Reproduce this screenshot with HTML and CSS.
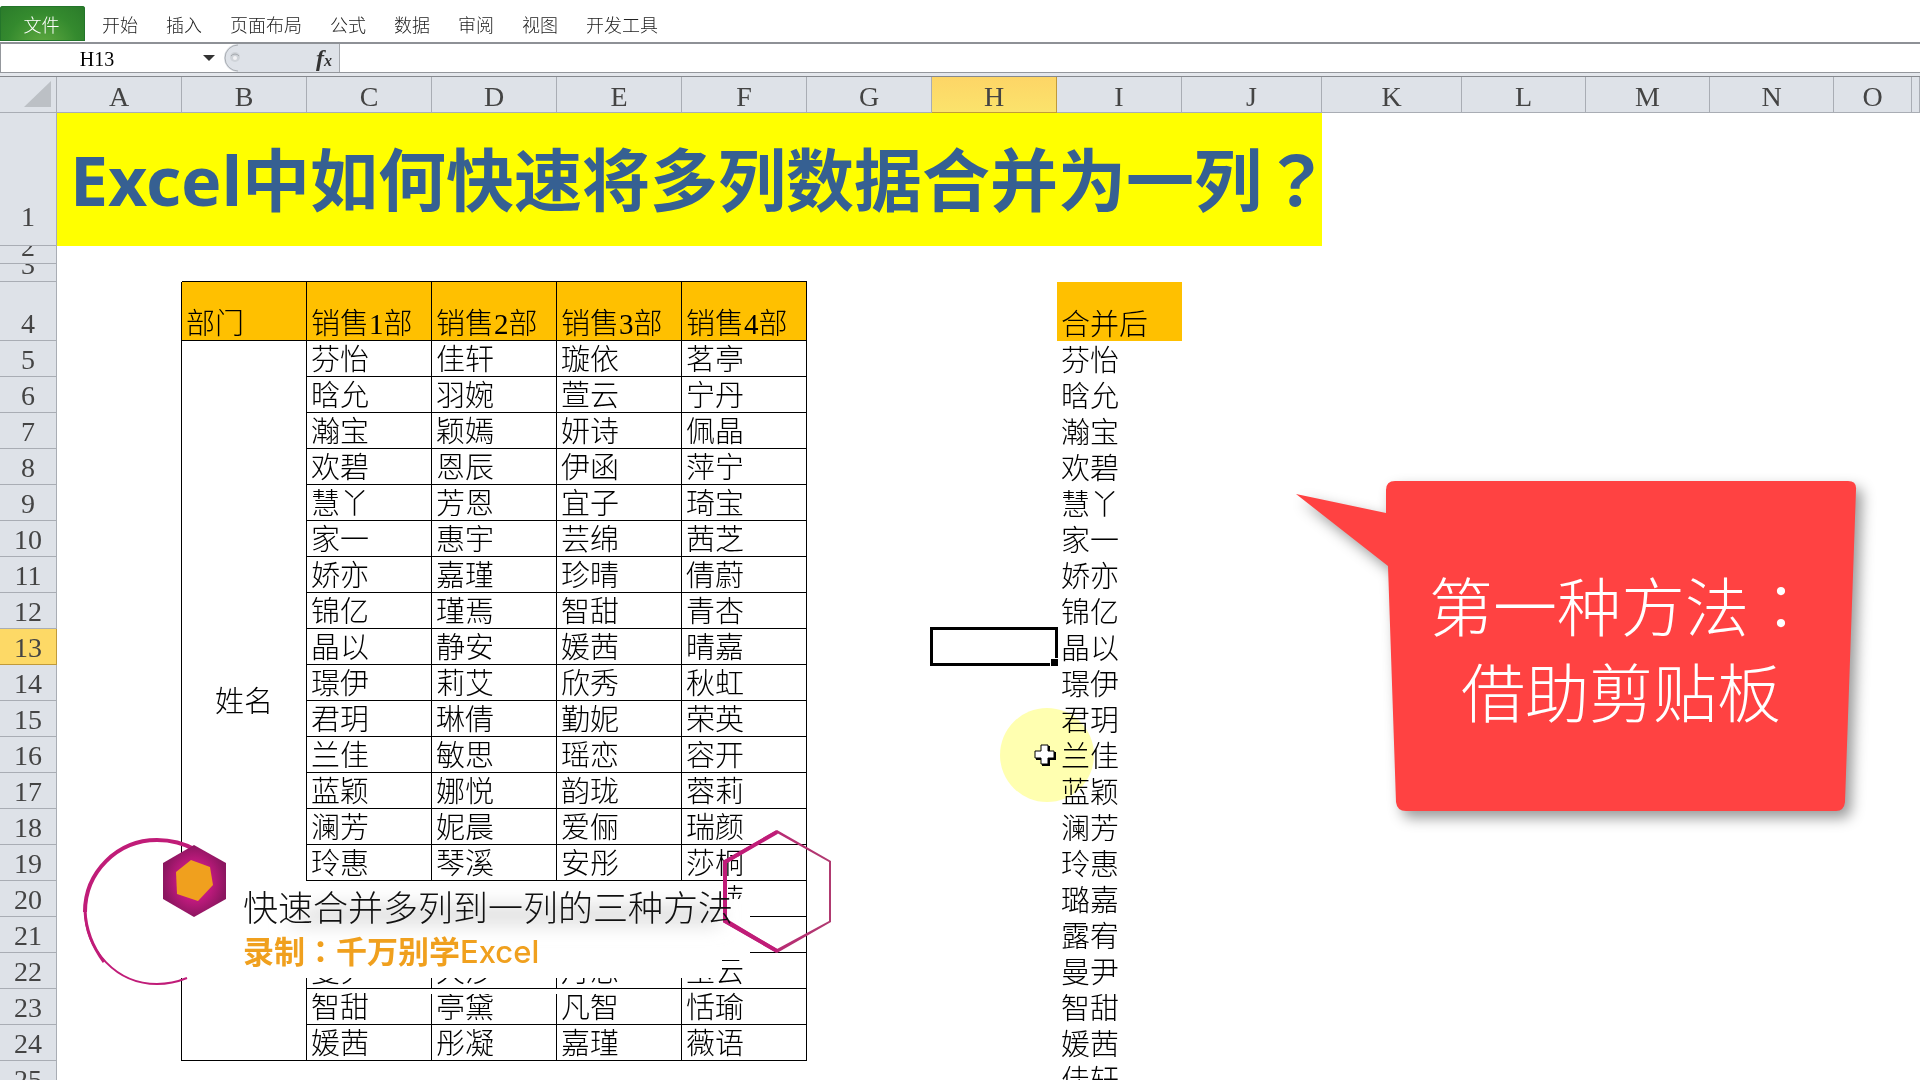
FILE: index.html
```html
<!DOCTYPE html>
<html lang="zh-CN">
<head>
<meta charset="utf-8">
<title>Excel中如何快速将多列数据合并为一列？</title>
<link rel="stylesheet" href="styles.css">
</head>
<body>
<nav class="ribbon">
  <button class="file-tab" type="button">文件</button>
  <a class="tab" href="#">开始</a>
  <a class="tab" href="#">插入</a>
  <a class="tab" href="#">页面布局</a>
  <a class="tab" href="#">公式</a>
  <a class="tab" href="#">数据</a>
  <a class="tab" href="#">审阅</a>
  <a class="tab" href="#">视图</a>
  <a class="tab" href="#">开发工具</a>
</nav>
<div class="formula-bar">
  <div class="name-box">
    <input class="name-input" type="text" value="H13" aria-label="名称框">
    <button class="name-drop" type="button" aria-label="展开名称框"><svg width="12" height="6" viewBox="0 0 12 6"><path d="M0 0h12L6 6z" fill="#333"/></svg></button>
  </div>
  <div class="fx-area">
    <svg class="fx-knob" width="16" height="28" viewBox="0 0 16 28"><path d="M14 1A13 13 0 0 0 14 27" fill="none" stroke="#a9adb2"/><circle cx="11" cy="13" r="5" fill="#cfd3d8"/><path d="M7 12a5 5 0 0 1 8 0" fill="none" stroke="#a4a8ad"/><circle cx="11" cy="14" r="2" fill="#f2f3f5"/></svg>
    <button class="fx" type="button" aria-label="插入函数">f<sub>x</sub></button>
  </div>
  <input class="formula-input" type="text" aria-label="编辑栏">
</div>
<div class="divider"></div>
<main class="sheet">
<table class="grid">
<colgroup><col class="c-row"><col class="c-std" span="9"><col class="c-wide" span="2"><col class="c-mid" span="3"><col class="c-small"><col></colgroup>
<thead>
<tr><th class="corner"><svg width="28" height="27" viewBox="0 0 28 27"><path d="M27 0v26H0z" fill="#bcc0c5"/></svg></th><th scope="col">A</th><th scope="col">B</th><th scope="col">C</th><th scope="col">D</th><th scope="col">E</th><th scope="col">F</th><th scope="col">G</th><th scope="col" class="active">H</th><th scope="col">I</th><th scope="col">J</th><th scope="col">K</th><th scope="col">L</th><th scope="col">M</th><th scope="col">N</th><th scope="col">O</th><th></th></tr>
</thead>
<tbody>
<tr class="r1"><th scope="row">1</th><td class="title" colspan="10">Excel中如何快速将多列数据合并为一列<span class="punct" lang="zh-TW">？</span></td></tr>
<tr class="thin"><th scope="row"><div class="clip">2</div></th></tr>
<tr class="thin"><th scope="row"><div class="clip">3</div></th><td></td><td class="under"></td><td class="under"></td><td class="under"></td><td class="under"></td><td class="under"></td></tr>
<tr class="r4"><th scope="row">4</th><td class="edge"></td><td class="b head">部门</td><td class="b head">销售1部</td><td class="b head">销售2部</td><td class="b head">销售3部</td><td class="b head">销售4部</td><td></td><td></td><td class="head">合并后</td></tr>
<tr><th scope="row">5</th><td class="edge"></td><td class="b span" rowspan="20">姓名</td><td class="b">芬怡</td><td class="b">佳轩</td><td class="b">璇依</td><td class="b">茗亭</td><td></td><td></td><td>芬怡</td></tr>
<tr><th scope="row">6</th><td class="edge"></td><td class="b">晗允</td><td class="b">羽婉</td><td class="b">萱云</td><td class="b">宁丹</td><td></td><td></td><td>晗允</td></tr>
<tr><th scope="row">7</th><td class="edge"></td><td class="b">瀚宝</td><td class="b">颖嫣</td><td class="b">妍诗</td><td class="b">佩晶</td><td></td><td></td><td>瀚宝</td></tr>
<tr><th scope="row">8</th><td class="edge"></td><td class="b">欢碧</td><td class="b">恩辰</td><td class="b">伊函</td><td class="b">萍宁</td><td></td><td></td><td>欢碧</td></tr>
<tr><th scope="row">9</th><td class="edge"></td><td class="b">慧丫</td><td class="b">芳恩</td><td class="b">宜子</td><td class="b">琦宝</td><td></td><td></td><td>慧丫</td></tr>
<tr><th scope="row">10</th><td class="edge"></td><td class="b">家一</td><td class="b">惠宇</td><td class="b">芸绵</td><td class="b">茜芝</td><td></td><td></td><td>家一</td></tr>
<tr><th scope="row">11</th><td class="edge"></td><td class="b">娇亦</td><td class="b">嘉瑾</td><td class="b">珍晴</td><td class="b">倩蔚</td><td></td><td></td><td>娇亦</td></tr>
<tr><th scope="row">12</th><td class="edge"></td><td class="b">锦亿</td><td class="b">瑾焉</td><td class="b">智甜</td><td class="b">青杏</td><td></td><td></td><td>锦亿</td></tr>
<tr><th scope="row" class="active">13</th><td class="edge"></td><td class="b">晶以</td><td class="b">静安</td><td class="b">媛茜</td><td class="b">晴嘉</td><td></td><td class="selected"><span class="selection"></span></td><td>晶以</td></tr>
<tr><th scope="row">14</th><td class="edge"></td><td class="b">璟伊</td><td class="b">莉艾</td><td class="b">欣秀</td><td class="b">秋虹</td><td></td><td></td><td>璟伊</td></tr>
<tr><th scope="row">15</th><td class="edge"></td><td class="b">君玥</td><td class="b">琳倩</td><td class="b">勤妮</td><td class="b">荣英</td><td></td><td></td><td>君玥</td></tr>
<tr><th scope="row">16</th><td class="edge"></td><td class="b">兰佳</td><td class="b">敏思</td><td class="b">瑶恋</td><td class="b">容开</td><td></td><td></td><td>兰佳</td></tr>
<tr><th scope="row">17</th><td class="edge"></td><td class="b">蓝颖</td><td class="b">娜悦</td><td class="b">韵珑</td><td class="b">蓉莉</td><td></td><td></td><td>蓝颖</td></tr>
<tr><th scope="row">18</th><td class="edge"></td><td class="b">澜芳</td><td class="b">妮晨</td><td class="b">爱俪</td><td class="b">瑞颜</td><td></td><td></td><td>澜芳</td></tr>
<tr><th scope="row">19</th><td class="edge"></td><td class="b">玲惠</td><td class="b">琴溪</td><td class="b">安彤</td><td class="b">莎桐</td><td></td><td></td><td>玲惠</td></tr>
<tr><th scope="row">20</th><td class="edge"></td><td class="b"></td><td class="b"></td><td class="b"></td><td class="b">若萍</td><td></td><td></td><td>璐嘉</td></tr>
<tr><th scope="row">21</th><td class="edge"></td><td class="b"></td><td class="b"></td><td class="b"></td><td class="b"></td><td></td><td></td><td>露宥</td></tr>
<tr><th scope="row">22</th><td class="edge"></td><td class="b">曼尹</td><td class="b">天沙</td><td class="b">月思</td><td class="b">玉云</td><td></td><td></td><td>曼尹</td></tr>
<tr><th scope="row">23</th><td class="edge"></td><td class="b">智甜</td><td class="b">亭黛</td><td class="b">凡智</td><td class="b">恬瑜</td><td></td><td></td><td>智甜</td></tr>
<tr><th scope="row">24</th><td class="edge"></td><td class="b">媛茜</td><td class="b">彤凝</td><td class="b">嘉瑾</td><td class="b">薇语</td><td></td><td></td><td>媛茜</td></tr>
<tr><th scope="row">25</th><td></td><td></td><td></td><td></td><td></td><td></td><td></td><td></td><td>佳轩</td></tr>
</tbody>
</table>
</main>

<svg class="pointer" width="96" height="96" viewBox="0 0 96 96">
  <circle cx="48" cy="48" r="47" fill="#ffffb0"/>
</svg>
<svg class="cross" width="24" height="24" viewBox="0 0 24 24">
  <path d="M9 3h8v6h6v8h-6v6H9v-6H3V9h6z" fill="#000"/>
  <path d="M8 2h7v6h6v7h-6v6H8v-6H2V8h6z" fill="#fff" stroke="#000"/>
</svg>

<aside class="callout">
  <svg class="callout-shape" width="600" height="380" viewBox="0 0 600 380">
    <path d="M105 11H558Q567 11 566 20L555 332Q554 341 546 341H116Q107 341 106 332L98 96L6 24L96 43V20Q96 11 105 11Z" fill="#ff4242"/>
  </svg>
  <p class="callout-text">第一种方法<span class="punct" lang="zh-TW">：</span><br>借助剪贴板</p>
</aside>

<section class="banner">
  <svg class="banner-shape" width="780" height="180" viewBox="0 0 780 180">
    <defs>
      <radialGradient id="hex"><stop offset="0.5" stop-color="#c41a80"/><stop offset="1" stop-color="#8c1660"/></radialGradient>
      <linearGradient id="ring" x1="0" x2="1"><stop offset="0" stop-color="#c01c78"/><stop offset="1" stop-color="#b03a70"/></linearGradient>
      <filter id="soft" x="-10%" y="-100%" width="120%" height="300%"><feGaussianBlur stdDeviation="9"/></filter>
    </defs>
    <path d="M86 61H648V79H670V140H642V158H86Z" fill="#fff"/>
    <path d="M345 169H560V174H345Z" fill="#fff"/>
    <path d="M240 84H640V106H200Z" fill="#e2e2e2" filter="url(#soft)"/>
    <path d="M116 30Q98 20 77 20A72 72 0 0 0 5 92" fill="none" stroke="#c01c78" stroke-width="4"/>
    <path d="M5 90A72 74 0 0 0 77 164Q92 164 107 158" fill="none" stroke="#c01c78" stroke-width="2"/>
    <path d="M5 90Q6 118 24 142" fill="none" stroke="#c01c78" stroke-width="3"/>
    <path d="M114 25L146 43V79L114 97L83 79V43Z" fill="url(#hex)"/>
    <path d="M111 40L130 47L133 65L118 81L97 74L96 52Z" fill="#f0a01e"/>
    <path d="M697 10L751 41V102L697 133L643 102V41ZM697 13L647 43V99L697 129L749 101V42Z" fill="url(#ring)" fill-rule="evenodd"/>
    <path d="M697 12L645 42V101L697 131" fill="none" stroke="#c01c78" stroke-width="4"/>
  </svg>
  <div class="banner-text">
    <p class="banner-title">快速合并多列到一列的三种方法</p>
    <p class="banner-author">录制<span class="punct" lang="zh-TW">：</span>千万别学<span class="latin">Excel</span></p>
  </div>
</section>
</body>
</html>
```
FILE: styles.css
```css
* { box-sizing: border-box; }

body {
  margin: 0;
  height: 100vh;
  overflow: hidden;
  position: relative;
  display: flex;
  flex-direction: column;
  background: #fff;
  color: #000;
  font-family: "Liberation Serif", "Noto Sans CJK SC", serif;
}

button, input { font: inherit; border: 0; padding: 0; margin: 0; background: none; }
p { margin: 0; }
.punct { font-family: "Noto Sans CJK TC", sans-serif; }

.ribbon {
  flex: none;
  display: flex;
  height: 44px;
  padding-top: 6px;
  border-bottom: 2px solid #8e9196;
  font: 300 18px/36px "Noto Sans CJK SC", sans-serif;
}
.file-tab {
  width: 85px;
  height: 35px;
  margin-right: 3px;
  padding-right: 2px;
  border-radius: 3px 3px 0 0;
  background: radial-gradient(ellipse at 50% 120%, #63ac42 0, #348a2e 60%, #2a7a2a 100%);
  box-shadow: inset 0 0 0 1px #23752a;
  color: #fff;
  font-weight: 300;
  line-height: 32px;
}
.tab { padding: 0 14px; color: #222; text-decoration: none; }

.formula-bar {
  flex: none;
  display: flex;
  height: 29px;
  border-bottom: 1px solid #94979c;
}
.name-box {
  display: flex;
  align-items: center;
  width: 224px;
  border-left: 1px solid #94979c;
}
.name-input { width: 192px; height: 28px; padding-top: 2px; text-align: center; font-size: 20px; font-weight: 400; }
.name-drop { display: flex; margin-left: 10px; }
.fx-area {
  display: flex;
  justify-content: space-between;
  width: 116px;
  padding-right: 7px;
  border-right: 1px solid #a5a8ad;
  border-radius: 14px 0 0 14px;
  background: #dee2e8;
}
.fx { color: #333; font-size: 24px; font-style: italic; font-weight: 700; line-height: 24px; }
.fx sub { font-size: 16px; line-height: 0; vertical-align: baseline; }
.formula-input { flex: 1; }
.divider { flex: none; height: 4px; background: #e4e7ec; border-bottom: 1px solid #85888d; }

.sheet { flex: 1; min-height: 0; overflow: hidden; }
.grid {
  width: 100%;
  table-layout: fixed;
  border-collapse: separate;
  border-spacing: 0;
  font-size: 29px;
  line-height: 31px;
}
.c-row { width: 57px; }
.c-std { width: 125px; }
.c-wide { width: 140px; }
.c-mid { width: 124px; }
.c-small { width: 78px; }

.grid tr { height: 36px; }
.grid th {
  padding: 0;
  border-right: 1px solid #a9adb4;
  border-bottom: 1px solid #a9adb4;
  background: #dee2e8;
  color: #444;
  font-weight: 400;
}
.grid thead th { height: 36px; padding-top: 4px; line-height: 31px; font-size: 28px; }
.grid tbody th { vertical-align: bottom; font-size: 28px; line-height: 33px; }
.grid th.corner { padding: 0 4px 0 0; text-align: right; }
.corner svg { display: block; margin-left: auto; }
.grid thead th.active {
  border-color: #c09a3a;
  background: linear-gradient(#fdd566, #fbe36c);
}
.grid tbody th.active { border-color: #c09a3a; background: #fdd966; }

.grid td {
  padding: 0 0 0 4px;
  border: 0 solid #000;
  vertical-align: bottom;
  font-weight: 300;
  white-space: nowrap;
}
.grid td.b { border-width: 0 1px 1px 0; }
.grid td.edge { border-right-width: 1px; }
.grid td.under { border-bottom-width: 1px; }
.grid td.head { background: #ffc000; }
.grid td.span { padding: 4px 0 0; text-align: center; vertical-align: middle; }
.grid .r1 { height: 133px; }
.grid .r1 th { padding-bottom: 12px; }
.grid .r4 { height: 59px; }
.grid .thin { height: 18px; }
.grid .thin td { height: 18px; line-height: 0; }
.clip {
  display: flex;
  align-items: flex-end;
  justify-content: center;
  height: 17px;
  overflow: hidden;
}
.grid td.title {
  padding: 0 0 0 13px;
  background: #ff0;
  color: #366092;
  font: 700 68px/100px "Noto Sans", "Noto Sans CJK SC", sans-serif;
  vertical-align: middle;
}
.title .punct { font-family: "Noto Sans CJK TC", sans-serif; line-height: 1; }

.selected { position: relative; }
.selection { position: absolute; inset: -2px -1px -1px -2px; border: 3px solid #000; }
.selection::after {
  content: "";
  position: absolute;
  right: -4px;
  bottom: -4px;
  width: 7px;
  height: 7px;
  border: 1px solid #fff;
  background: #000;
}

.pointer { position: absolute; left: 999px; top: 707px; mix-blend-mode: multiply; }
.cross { position: absolute; left: 1033px; top: 743px; }

.callout {
  position: absolute;
  left: 1290px;
  top: 470px;
  width: 600px;
  height: 380px;
  padding: 90px 0 0 96px;
}
.callout-shape { position: absolute; inset: 0; filter: drop-shadow(6px 7px 7px rgba(0, 0, 0, 0.4)); }
.callout-text {
  position: relative;
  width: 470px;
  color: #fff;
  font: 300 64px/86px "Noto Sans CJK SC", sans-serif;
  text-align: center;
  white-space: nowrap;
}

.banner {
  position: absolute;
  left: 80px;
  top: 820px;
  width: 780px;
  height: 180px;
  padding: 62px 0 0 163px;
}
.banner-shape { position: absolute; inset: 0; }
.banner-text { position: relative; }
.banner-title { color: #111; font: 300 35px/48px "Noto Sans CJK SC", sans-serif; }
.banner-author { color: #f0a01e; font: 700 31px/40px "Noto Sans CJK SC", sans-serif; }
.latin { font-family: Inter, sans-serif; font-weight: 500; }
```
